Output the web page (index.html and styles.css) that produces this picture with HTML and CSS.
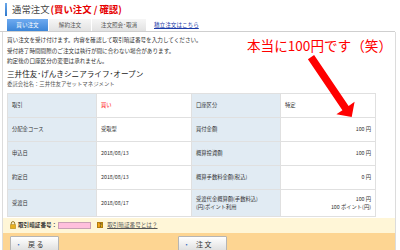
FILE: index.html
```html
<!DOCTYPE html>
<html lang="ja">
<head>
    <meta charset="UTF-8">
    <title>通常注文（買い注文 / 確認）</title>
    <link rel="stylesheet" href="styles.css">
</head>
<body>
    <div class="page">
        <h1 class="title"><span class="title-bar"></span>通常注文<span class="title-sub">(買い注文 / 確認)</span></h1>

        <div class="tabs">
            <span class="tab tab-active">買い注文</span>
            <span class="tab">解約注文</span>
            <span class="tab tab-wide">注文照会･取消</span>
            <a class="tab-link" href="#">積立注文はこちら</a>
        </div>

        <div class="panel">
            <div class="panel-body">
                <p class="notice">買い注文を受け付けます。内容を確認して取引暗証番号を入力してください。<br>受付終了時間間際のご注文は執行が間に合わない場合があります。<br>約定後の口座区分の変更は承れません。</p>
                <h2 class="fund-name">三井住友･げんきシニアライフ･オープン</h2>
                <p class="fund-company">委託会社名：三井住友アセットマネジメント</p>

                <table class="order-table">
                    <tr>
                        <th>取引</th>
                        <td class="buy">買い</td>
                        <th>口座区分</th>
                        <td>特定</td>
                    </tr>
                    <tr>
                        <th>分配金コース</th>
                        <td>受取型</td>
                        <th>買付金額</th>
                        <td class="num">100 円</td>
                    </tr>
                    <tr>
                        <th>申込日</th>
                        <td>2018/08/13</td>
                        <th>概算投資額</th>
                        <td class="num">100 円</td>
                    </tr>
                    <tr>
                        <th>約定日</th>
                        <td>2018/08/13</td>
                        <th>概算手数料金額(税込)</th>
                        <td class="num">0 円</td>
                    </tr>
                    <tr class="row-tall">
                        <th>受渡日</th>
                        <td>2018/08/17</td>
                        <th>受渡代金概算額(手数料込)<br>(円)ポイント利用</th>
                        <td class="num">100 円<br>100 ポイント(円)</td>
                    </tr>
                </table>
            </div>

            <div class="pin-bar">
                <svg class="icon-lock" width="6" height="8" viewBox="0 0 6 8">
                    <path d="M1.3 3.5V2.3a1.7 1.7 0 0 1 3.4 0v1.2" fill="none" stroke="#8a6a10" stroke-width="0.9"/>
                    <rect x="0.3" y="3.4" width="5.4" height="4.3" rx="0.5" fill="#e8b020" stroke="#a07810" stroke-width="0.5"/>
                </svg>
                <label class="pin-label" for="pin">取引暗証番号：</label>
                <input class="pin-input" id="pin" type="password">
                <span class="icon-help">?</span>
                <a class="pin-link" href="#">取引暗証番号とは？</a>
            </div>

            <div class="actions">
                <button class="btn"><span class="btn-dot">・</span>戻 る</button>
                <button class="btn"><span class="btn-dot">・</span>注 文</button>
            </div>
        </div>
    </div>

    <!-- annotation drawn on top of the screenshot -->
    <div class="memo">本当に100円です（笑）</div>
    <svg class="memo-arrow" width="400" height="250" viewBox="0 0 400 250">
        <polygon points="307.9,59.2 314.1,54.9 348.6,105.9 354.6,101.8 351.7,117.1 336.4,114.2 342.4,110.2" fill="#f00"/>
    </svg>
</body>
</html>
```

FILE: styles.css
```css
* {
    box-sizing: border-box;
    margin: 0;
    padding: 0;
}

body {
    font-family: "Noto Sans CJK JP", "Noto Sans", sans-serif;
    color: #333;
    background: #fff;
    width: 400px;
    height: 250px;
    overflow: hidden;
    position: relative;
}

.page {
    width: 400px;
}

.title {
    display: flex;
    align-items: center;
    height: 17px;
    padding: 1px 0 0 5px;
    font-size: 9.4px;
    font-weight: 400;
    color: #444;
}

.title-bar {
    width: 2px;
    height: 13px;
    background: linear-gradient(#6aa8ea, #2f78cc);
    margin-right: 5px;
}

.title-sub {
    color: #e60000;
    font-weight: 700;
    margin-left: 1px;
}

.tabs {
    display: flex;
    align-items: flex-end;
    height: 15px;
    padding: 2px 0 0 7px;
    border-bottom: 1px solid #cfcfcf;
    width: 395px;
}

.tab {
    width: 43px;
    height: 12px;
    line-height: 12px;
    text-align: center;
    font-size: 5.6px;
    color: #555;
    background: linear-gradient(#f6f6f6, #e2e2e2);
    border-right: 1px solid #fff;
}

.tab-wide {
    width: 55px;
}

.tab-active {
    width: 42px;
    color: #fff;
    background: linear-gradient(#6eaaf0, #3c86d8);
}

.tab-link {
    margin-left: 7px;
    align-self: center;
    font-size: 5.6px;
    color: #1a3aa8;
    text-decoration: underline;
}

.panel {
    width: 394px;
    margin-left: 2px;
    border-left: 1px solid #dcdcdc;
    border-right: 1px solid #dcdcdc;
}

.panel-body {
    padding: 3px 0 0 4px;
}

.notice {
    font-size: 5.6px;
    line-height: 10.5px;
    color: #333;
}

.fund-name {
    font-size: 7.6px;
    font-weight: 400;
    line-height: 12px;
    margin-top: 1px;
    color: #222;
}

.fund-company {
    font-size: 5.4px;
    line-height: 9px;
    color: #555;
}

.order-table {
    width: 368px;
    margin-top: 4px;
    border-collapse: collapse;
    table-layout: fixed;
    font-size: 5.3px;
}

.order-table th,
.order-table td {
    height: 24px;
    padding: 0 4px;
    border: 1px solid #e0e0e0;
    text-align: left;
    font-weight: 400;
    line-height: 8px;
    vertical-align: middle;
}

.order-table th {
    width: 89px;
    background: #e1ebf3;
    color: #333;
}

.order-table td {
    width: 95px;
    background: #fff;
    color: #333;
}

.order-table .row-tall th,
.order-table .row-tall td {
    height: 27px;
}

.order-table .buy {
    color: #f00;
}

.order-table .num {
    text-align: right;
}

.pin-bar {
    display: flex;
    align-items: center;
    height: 15px;
    margin-top: 1px;
    padding-left: 7px;
    background: #fff6d7;
    font-size: 5.6px;
}

.icon-lock {
    margin-right: 2px;
}

.pin-label {
    font-weight: 700;
    color: #333;
}

.pin-input {
    width: 33px;
    height: 7px;
    margin-left: 1px;
    border: 1px solid #c8a0b4;
    background: #ffbfdc;
}

.icon-help {
    width: 6px;
    height: 6px;
    margin-left: 6px;
    background: #f0a818;
    border: 1px solid #b07a10;
    color: #333;
    font-size: 5px;
    font-weight: 700;
    line-height: 4px;
    text-align: center;
}

.pin-link {
    margin-left: 4px;
    color: #555;
    text-decoration: underline;
}

.actions {
    display: flex;
    gap: 119px;
    height: 20px;
    padding: 3px 0 0 7px;
    background: #fdd592;
}

.btn {
    width: 49px;
    height: 17px;
    border: 1px solid #b5b5b5;
    border-radius: 1px;
    background: linear-gradient(#ffffff, #dcdcdc);
    font-family: inherit;
    font-size: 7px;
    color: #333;
    text-align: left;
    padding-left: 4px;
}

.btn-dot {
    color: #3a6fc0;
    margin-right: 6px;
}

.memo {
    position: absolute;
    left: 247px;
    top: 36px;
    font-size: 13.6px;
    line-height: 18px;
    color: #f00;
    white-space: nowrap;
}

.memo-arrow {
    position: absolute;
    left: 0;
    top: 0;
    pointer-events: none;
}
```
